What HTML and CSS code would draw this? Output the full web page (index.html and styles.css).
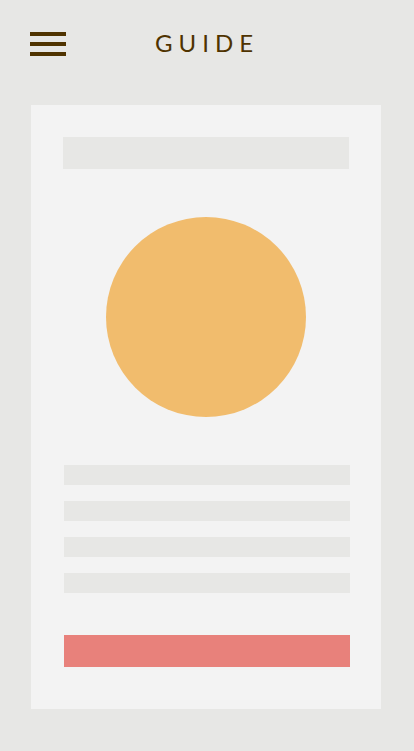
FILE: index.html
```html
<!DOCTYPE html>
<html lang="en">
<head>
<meta charset="utf-8">
<meta name="viewport" content="width=device-width, initial-scale=1">
<title>Guide</title>
<link rel="stylesheet" href="styles.css">
</head>
<body>
<header class="header">
  <button class="menu" aria-label="Menu">
    <span class="menu-bar"></span>
    <span class="menu-bar"></span>
    <span class="menu-bar"></span>
  </button>
  <h1 class="title">GUIDE</h1>
  <span class="spacer"></span>
</header>
<main class="card">
  <div class="heading-bar"></div>
  <div class="circle"></div>
  <div class="lines">
    <div class="line"></div>
    <div class="line"></div>
    <div class="line"></div>
    <div class="line"></div>
  </div>
  <div class="button"></div>
</main>
</body>
</html>
```
FILE: styles.css
```css
html, body {
  margin: 0;
  padding: 0;
  background: #e7e7e5;
  font-family: Lato, "Open Sans", sans-serif;
}

.header {
  height: 88px;
  display: grid;
  grid-template-columns: 1fr auto 1fr;
  align-items: center;
  padding: 0 30px;
}

.menu {
  justify-self: start;
  display: flex;
  flex-direction: column;
  gap: 6px;
  width: 36px;
  padding: 0;
  margin: 0;
  border: 0;
  background: none;
}

.menu-bar {
  display: block;
  height: 4px;
  width: 36px;
  background: #4f3300;
}

.title {
  margin: 0 0 2px 0;
  font-size: 24px;
  font-weight: 400;
  letter-spacing: 6px;
  color: #4f3300;
  line-height: 1;
}

.card {
  margin: 17px 33px 0 31px;
  background: #f3f3f3;
  padding: 32px 32px 42px 32px;
  display: flex;
  flex-direction: column;
}

.heading-bar {
  height: 32px;
  background: #e7e7e5;
}

.circle {
  align-self: center;
  width: 200px;
  height: 200px;
  border-radius: 50%;
  background: #f1bc6d;
  margin-top: 48px;
}

.lines {
  margin: 48px -1px 0 1px;
  display: flex;
  flex-direction: column;
  gap: 16px;
}

.line {
  height: 20px;
  background: #e7e7e5;
}

.button {
  margin: 42px -1px 0 1px;
  height: 32px;
  background: #e8817b;
}
```
